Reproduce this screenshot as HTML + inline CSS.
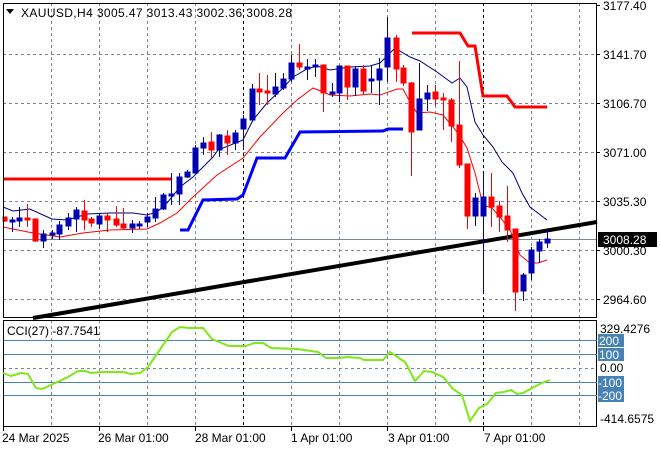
<!DOCTYPE html>
<html><head><meta charset="utf-8"><style>
html,body{margin:0;padding:0;background:#fff;}
svg{display:block;font-family:"Liberation Sans",sans-serif;}
</style></head><body>
<svg width="660" height="450" viewBox="0 0 660 450" xmlns="http://www.w3.org/2000/svg">
<rect width="660" height="450" fill="#fff"/>
<g stroke="#7a8694" stroke-width="1" stroke-dasharray="3,3" fill="none" shape-rendering="crispEdges">
<line x1="3" y1="54.5" x2="597" y2="54.5"/><line x1="3" y1="103.5" x2="597" y2="103.5"/><line x1="3" y1="152.5" x2="597" y2="152.5"/><line x1="3" y1="201.5" x2="597" y2="201.5"/><line x1="3" y1="250.5" x2="597" y2="250.5"/><line x1="3" y1="299.5" x2="597" y2="299.5"/>
<line x1="51.5" y1="3" x2="51.5" y2="318"/><line x1="99.5" y1="3" x2="99.5" y2="318"/><line x1="147.5" y1="3" x2="147.5" y2="318"/><line x1="195.5" y1="3" x2="195.5" y2="318"/><line x1="291.5" y1="3" x2="291.5" y2="318"/><line x1="339.5" y1="3" x2="339.5" y2="318"/><line x1="387.5" y1="3" x2="387.5" y2="318"/><line x1="435.5" y1="3" x2="435.5" y2="318"/><line x1="531.5" y1="3" x2="531.5" y2="318"/><line x1="579.5" y1="3" x2="579.5" y2="318"/>
<line x1="51.5" y1="320" x2="51.5" y2="426"/><line x1="99.5" y1="320" x2="99.5" y2="426"/><line x1="147.5" y1="320" x2="147.5" y2="426"/><line x1="195.5" y1="320" x2="195.5" y2="426"/><line x1="291.5" y1="320" x2="291.5" y2="426"/><line x1="339.5" y1="320" x2="339.5" y2="426"/><line x1="387.5" y1="320" x2="387.5" y2="426"/><line x1="435.5" y1="320" x2="435.5" y2="426"/><line x1="531.5" y1="320" x2="531.5" y2="426"/><line x1="579.5" y1="320" x2="579.5" y2="426"/>
<line x1="3" y1="368.5" x2="597" y2="368.5"/>
</g>
<g stroke="#000" stroke-width="1" stroke-dasharray="3,3" shape-rendering="crispEdges">
<line x1="243.5" y1="3" x2="243.5" y2="318"/><line x1="483.5" y1="3" x2="483.5" y2="318"/>
<line x1="243.5" y1="320" x2="243.5" y2="426"/><line x1="483.5" y1="320" x2="483.5" y2="426"/>
</g>
<line x1="3" y1="239.5" x2="597" y2="239.5" stroke="#7a8694" stroke-width="1" shape-rendering="crispEdges"/>
<line x1="33" y1="318" x2="597" y2="222" stroke="#000" stroke-width="4"/>
<polyline points="4,179 171,179" stroke="#ff0000" stroke-width="3" fill="none"/>
<polyline points="412,33 460,33 468,46 475,46 483,96 507,96 515,107 547,107" stroke="#ff0000" stroke-width="3" fill="none"/>
<polyline points="180,230 188,230 203,200 237,199 243,195 257,158 285,158 300,132 383,131 388,129 403,129" stroke="#0000ff" stroke-width="3" fill="none"/>
<polyline points="3,207 13,211 30,209 43,215 52,219 67,220 87,214 110,213 133,213 147,215 157,212 167,203 180,187 193,177 213,157 218,150 243,140 253,120 267,103 283,88 293,77 307,69 317,66 330,70 350,67 370,66 380,63 395,48 410,57 420,61 437,72 452,83 460,78 467,87 475,122 483,135 493,147 502,162 513,173 522,193 530,207 547,220" stroke="#000080" stroke-width="1" fill="none"/>
<polyline points="3,227 33,233 60,237 83,233 110,230 147,229 160,223 177,213 193,197 217,175 243,158 260,137 283,113 297,100 313,88 323,92 330,95 350,96 370,94 380,95 397,89 403,89 410,102 417,113 430,112 443,115 458,133 467,148 475,173 483,205 492,208 500,217 510,230 520,255 530,263 538,263 547,260" stroke="#ff0000" stroke-width="1" fill="none"/>
<g stroke-width="1" shape-rendering="crispEdges">
<g stroke="#ff0000" fill="#ff0000">
<line x1="4.5" y1="217" x2="4.5" y2="222"/><rect x="3" y="217" width="4" height="4"/>
<line x1="27.5" y1="204" x2="27.5" y2="227"/><rect x="25" y="218" width="5" height="2"/>
<line x1="35.5" y1="219" x2="35.5" y2="242"/><rect x="33" y="219" width="5" height="22"/>
<line x1="84.5" y1="200" x2="84.5" y2="230"/><rect x="82" y="211" width="5" height="9"/>
<line x1="91.5" y1="217" x2="91.5" y2="227"/><rect x="89" y="219" width="5" height="4"/>
<line x1="107.5" y1="213" x2="107.5" y2="232"/><rect x="105" y="216" width="5" height="4"/>
<line x1="116.5" y1="206" x2="116.5" y2="227"/><rect x="114" y="219" width="5" height="6"/>
<line x1="123.5" y1="208" x2="123.5" y2="229"/><rect x="121" y="224" width="5" height="4"/>
<line x1="211.5" y1="132" x2="211.5" y2="158"/><rect x="209" y="142" width="5" height="8"/>
<line x1="227.5" y1="130" x2="227.5" y2="155"/><rect x="225" y="136" width="5" height="7"/>
<line x1="259.5" y1="73" x2="259.5" y2="105"/><rect x="257" y="89" width="5" height="3"/>
<line x1="267.5" y1="75" x2="267.5" y2="105"/><rect x="265" y="91" width="5" height="2"/>
<line x1="299.5" y1="44" x2="299.5" y2="70"/><rect x="297" y="63" width="5" height="4"/>
<line x1="323.5" y1="65" x2="323.5" y2="112"/><rect x="321" y="65" width="5" height="28"/>
<line x1="347.5" y1="66" x2="347.5" y2="100"/><rect x="345" y="66" width="5" height="21"/>
<line x1="363.5" y1="65" x2="363.5" y2="95"/><rect x="361" y="69" width="5" height="22"/>
<line x1="396.5" y1="35" x2="396.5" y2="82"/><rect x="394" y="38" width="5" height="31"/>
<line x1="403.5" y1="65" x2="403.5" y2="86"/><rect x="401" y="68" width="5" height="15"/>
<line x1="411.5" y1="82" x2="411.5" y2="176"/><rect x="409" y="83" width="5" height="49"/>
<line x1="435.5" y1="85" x2="435.5" y2="106"/><rect x="433" y="92" width="5" height="7"/>
<line x1="443.5" y1="93" x2="443.5" y2="130"/><rect x="441" y="98" width="5" height="2"/>
<line x1="451.5" y1="98" x2="451.5" y2="142"/><rect x="449" y="100" width="5" height="26"/>
<line x1="459.5" y1="61" x2="459.5" y2="168"/><rect x="457" y="125" width="5" height="40"/>
<line x1="467.5" y1="164" x2="467.5" y2="229"/><rect x="465" y="164" width="5" height="52"/>
<line x1="491.5" y1="173" x2="491.5" y2="227"/><rect x="489" y="197" width="5" height="10"/>
<line x1="499.5" y1="201" x2="499.5" y2="232"/><rect x="497" y="206" width="5" height="11"/>
<line x1="507.5" y1="186" x2="507.5" y2="242"/><rect x="505" y="216" width="5" height="14"/>
<line x1="515.5" y1="229" x2="515.5" y2="311"/><rect x="513" y="229" width="5" height="63"/>
</g>
<g stroke="#0000b0" fill="#0000b0">
<line x1="12.5" y1="217" x2="12.5" y2="232"/><rect x="10" y="220" width="5" height="2"/>
<line x1="19.5" y1="207" x2="19.5" y2="227"/><rect x="17" y="218" width="5" height="3"/>
<line x1="43.5" y1="230" x2="43.5" y2="248"/><rect x="41" y="234" width="5" height="7"/>
<line x1="52.5" y1="230" x2="52.5" y2="239"/><rect x="50" y="233" width="5" height="2"/>
<line x1="59.5" y1="221" x2="59.5" y2="240"/><rect x="57" y="225" width="5" height="9"/>
<line x1="68.5" y1="213" x2="68.5" y2="230"/><rect x="66" y="218" width="5" height="8"/>
<line x1="76.5" y1="207" x2="76.5" y2="232"/><rect x="74" y="210" width="5" height="9"/>
<line x1="99.5" y1="213" x2="99.5" y2="229"/><rect x="97" y="216" width="5" height="8"/>
<line x1="132.5" y1="220" x2="132.5" y2="233"/><rect x="130" y="224" width="5" height="4"/>
<line x1="139.5" y1="221" x2="139.5" y2="229"/><rect x="137" y="224" width="5" height="2"/>
<line x1="147.5" y1="213" x2="147.5" y2="227"/><rect x="145" y="217" width="5" height="5"/>
<line x1="155.5" y1="197" x2="155.5" y2="222"/><rect x="153" y="209" width="5" height="9"/>
<line x1="163.5" y1="193" x2="163.5" y2="210"/><rect x="161" y="195" width="5" height="14"/>
<line x1="171.5" y1="173" x2="171.5" y2="205"/><rect x="169" y="194" width="5" height="2"/>
<line x1="179.5" y1="173" x2="179.5" y2="205"/><rect x="177" y="177" width="5" height="17"/>
<line x1="187.5" y1="170" x2="187.5" y2="178"/><rect x="185" y="172" width="5" height="5"/>
<line x1="195.5" y1="145" x2="195.5" y2="175"/><rect x="193" y="148" width="5" height="25"/>
<line x1="203.5" y1="137" x2="203.5" y2="155"/><rect x="201" y="143" width="5" height="5"/>
<line x1="219.5" y1="134" x2="219.5" y2="157"/><rect x="217" y="135" width="5" height="15"/>
<line x1="235.5" y1="130" x2="235.5" y2="150"/><rect x="233" y="133" width="5" height="10"/>
<line x1="243.5" y1="115" x2="243.5" y2="150"/><rect x="241" y="119" width="5" height="10"/>
<line x1="252.5" y1="84" x2="252.5" y2="122"/><rect x="250" y="89" width="5" height="31"/>
<line x1="275.5" y1="73" x2="275.5" y2="97"/><rect x="273" y="87" width="5" height="7"/>
<line x1="283.5" y1="73" x2="283.5" y2="90"/><rect x="281" y="79" width="5" height="9"/>
<line x1="291.5" y1="55" x2="291.5" y2="82"/><rect x="289" y="63" width="5" height="16"/>
<line x1="307.5" y1="59" x2="307.5" y2="80"/><rect x="305" y="67" width="5" height="2"/>
<line x1="315.5" y1="59" x2="315.5" y2="77"/><rect x="313" y="65" width="5" height="2"/>
<line x1="332.5" y1="83" x2="332.5" y2="97"/><rect x="330" y="92" width="5" height="2"/>
<line x1="339.5" y1="66" x2="339.5" y2="102"/><rect x="337" y="66" width="5" height="27"/>
<line x1="355.5" y1="66" x2="355.5" y2="96"/><rect x="353" y="69" width="5" height="18"/>
<line x1="371.5" y1="66" x2="371.5" y2="93"/><rect x="369" y="79" width="5" height="2"/>
<line x1="379.5" y1="58" x2="379.5" y2="105"/><rect x="377" y="69" width="5" height="11"/>
<line x1="387.5" y1="17" x2="387.5" y2="82"/><rect x="385" y="38" width="5" height="29"/>
<line x1="419.5" y1="63" x2="419.5" y2="130"/><rect x="417" y="99" width="5" height="31"/>
<line x1="427.5" y1="85" x2="427.5" y2="111"/><rect x="425" y="93" width="5" height="6"/>
<line x1="475.5" y1="193" x2="475.5" y2="226"/><rect x="473" y="198" width="5" height="18"/>
<line x1="483.5" y1="174" x2="483.5" y2="293"/><rect x="481" y="197" width="5" height="19"/>
<line x1="523.5" y1="273" x2="523.5" y2="301"/><rect x="521" y="275" width="5" height="16"/>
<line x1="531.5" y1="247" x2="531.5" y2="280"/><rect x="529" y="250" width="5" height="23"/>
<line x1="539.5" y1="239" x2="539.5" y2="263"/><rect x="537" y="242" width="5" height="9"/>
<line x1="547.5" y1="230" x2="547.5" y2="248"/><rect x="545" y="239" width="5" height="4"/>
</g>
</g>
<rect x="3.5" y="3.5" width="593" height="314" fill="none" stroke="#000" stroke-width="1" shape-rendering="crispEdges"/>
<rect x="3.5" y="320.5" width="593" height="106" fill="none" stroke="#000" stroke-width="1" shape-rendering="crispEdges"/>
<g stroke="#4682b4" stroke-width="1" shape-rendering="crispEdges">
<line x1="4" y1="340.5" x2="597" y2="340.5"/><line x1="4" y1="354.5" x2="597" y2="354.5"/><line x1="4" y1="382.5" x2="597" y2="382.5"/><line x1="4" y1="395.5" x2="597" y2="395.5"/>
</g>
<polyline points="3,373 11,376 21,373 28,374 36,388 42,389 51,385 68,377 78,371 85,371 91,373 102,372 123,372 131,374 140,373 148,367 161,348 172,332 180,327 189,328 203,328 212,339 229,346 246,346 254,343 263,343 271,348 297,349 318,352 326,358 339,358 347,357 360,358 364,360 383,360 390,352 405,362 415,381 424,371 432,372 443,377 453,389 462,395 470,421 479,408 487,404 496,393 504,392 511,390 517,394 523,393 534,387 542,383 550,380" stroke="#7fe817" stroke-width="2" fill="none"/>
<g stroke="#000" shape-rendering="crispEdges">
<line x1="597" y1="5.5" x2="600" y2="5.5"/><line x1="597" y1="54.5" x2="600" y2="54.5"/><line x1="597" y1="103.5" x2="600" y2="103.5"/><line x1="597" y1="152.5" x2="600" y2="152.5"/><line x1="597" y1="201.5" x2="600" y2="201.5"/><line x1="597" y1="250.5" x2="600" y2="250.5"/><line x1="597" y1="299.5" x2="600" y2="299.5"/>
<line x1="3.5" y1="427" x2="3.5" y2="431"/><line x1="99.5" y1="427" x2="99.5" y2="431"/><line x1="195.5" y1="427" x2="195.5" y2="431"/><line x1="291.5" y1="427" x2="291.5" y2="431"/><line x1="387.5" y1="427" x2="387.5" y2="431"/><line x1="483.5" y1="427" x2="483.5" y2="431"/>
</g>
<g font-size="12" fill="#000">
<text x="21" y="17" textLength="271" lengthAdjust="spacing">XAUUSD,H4  3005.47 3013.43 3002.36 3008.28</text>
<text x="603" y="10">3177.40</text>
<text x="603" y="59">3141.70</text>
<text x="603" y="108">3106.70</text>
<text x="603" y="157">3071.00</text>
<text x="603" y="206">3035.30</text>
<text x="603" y="255">3000.30</text>
<text x="603" y="304">2964.60</text>
<text x="7" y="335">CCI(27) -87.7541</text>
<text x="600" y="333">329.4276</text>
<text x="600" y="372">0.00</text>
<text x="600" y="423">-414.6575</text>
<text x="2" y="442">24 Mar 2025</text>
<text x="98" y="442">26 Mar 01:00</text>
<text x="195" y="442">28 Mar 01:00</text>
<text x="291" y="442">1 Apr 01:00</text>
<text x="388" y="442">3 Apr 01:00</text>
<text x="484" y="442">7 Apr 01:00</text>
</g>
<path d="M6,9 L14,9 L10,14 Z" fill="#000"/>
<rect x="598" y="232" width="59" height="15" fill="#000"/>
<text x="603" y="244" font-size="12" fill="#fff">3008.28</text>
<g fill="#4682b4">
<rect x="598" y="334" width="26" height="13"/><rect x="598" y="348" width="26" height="13"/><rect x="598" y="376" width="26" height="13"/><rect x="598" y="389" width="26" height="13"/>
</g>
<g font-size="12" fill="#fff">
<text x="599" y="345">200</text><text x="599" y="359">100</text><text x="598" y="387">-100</text><text x="598" y="400">-200</text>
</g>
</svg>
</body></html>
